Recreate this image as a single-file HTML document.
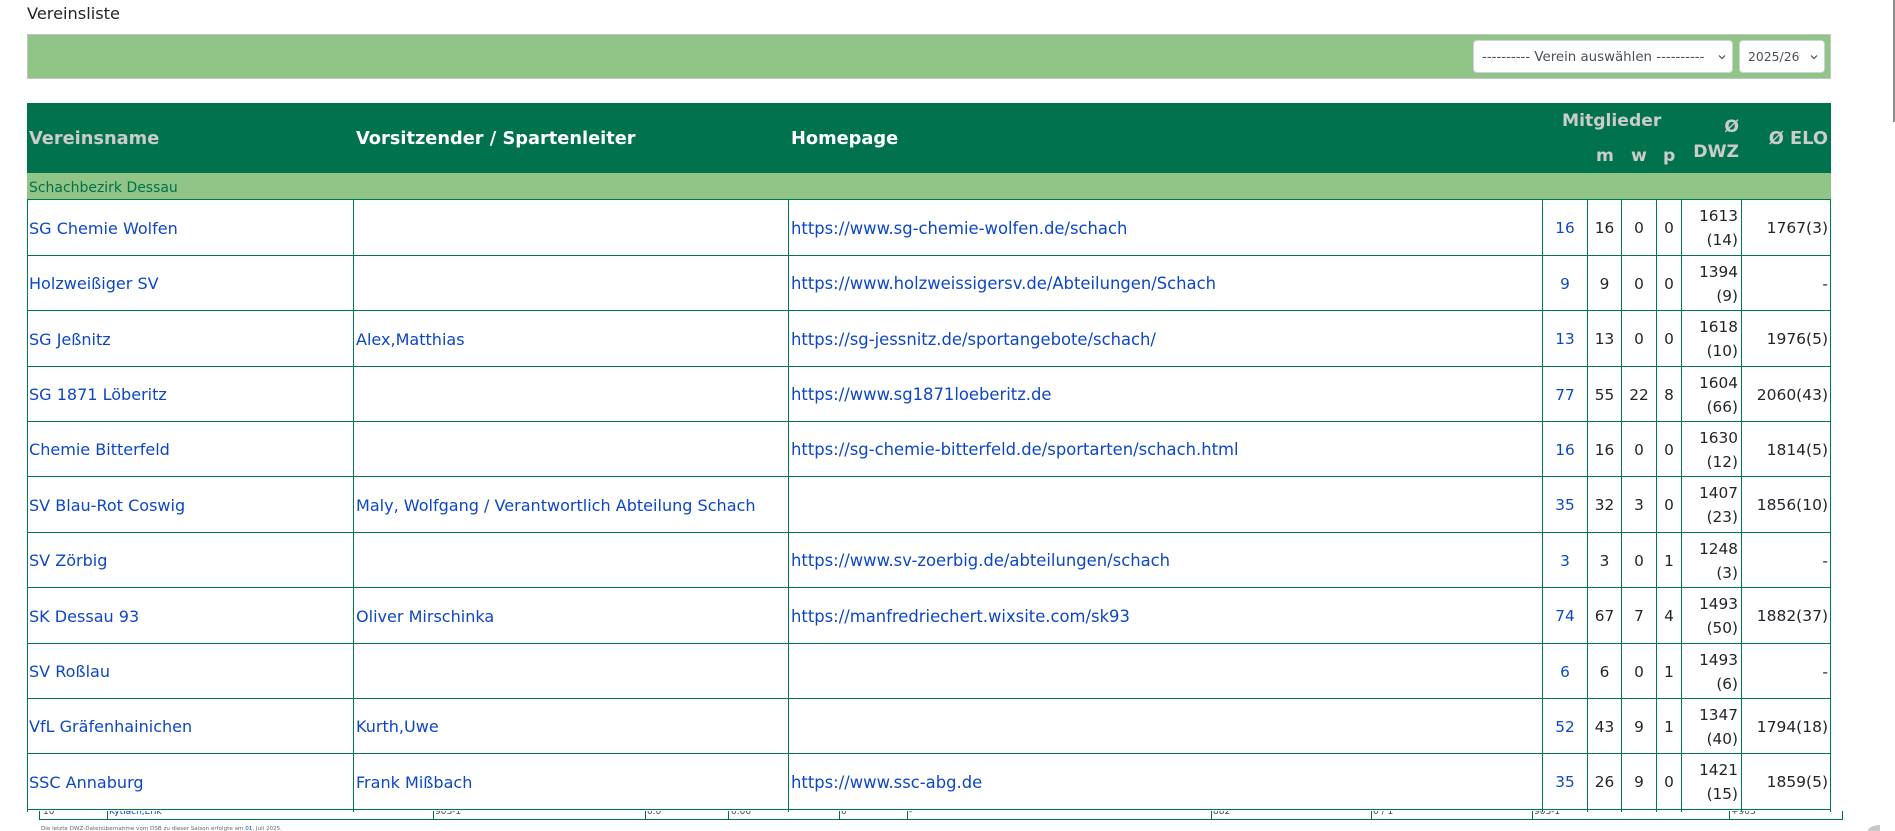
<!DOCTYPE html>
<html lang="de"><head><meta charset="utf-8"><title>Vereinsliste</title>
<style>
html,body{margin:0;padding:0;background:#fff;width:1895px;height:831px;overflow:hidden}
body{position:relative;font-family:"DejaVu Sans","Liberation Sans",sans-serif;font-size:15.3px;color:#212529}
.a{position:absolute;white-space:nowrap}
a{color:#0d47c4;text-decoration:none}
.r{position:absolute;left:0;width:1895px}
.r>*{position:absolute;white-space:nowrap;top:1px;line-height:inherit}
.n{left:29px;font-size:16.05px}.c{left:356px;font-size:16.05px}.h{left:791px;font-size:16.4px}
.k,.m,.w,.p{text-align:center}
.k{left:1543px;width:44px}.m{left:1588px;width:33px}.w{left:1622px;width:34px}.p{left:1657px;width:24px}
.d{left:1682px;width:56px;text-align:right;line-height:23.5px!important;white-space:normal!important;top:5px!important}
.e{left:1742px;width:86px;text-align:right;font-size:15.5px}
.hl{position:absolute;left:27px;width:1804px;height:1px;background:#007550}
.vl{position:absolute;top:199px;width:1px;height:613px;background:#007a55}
.th{position:absolute;white-space:nowrap;font-weight:bold;font-size:17.2px;color:#ccc}
.tl{font-size:17.8px}
.tick{position:absolute;top:811px;width:1px;height:9px;background:#00704a}
.low{position:absolute;top:803.5px;line-height:16px;font-size:9px;color:#444;white-space:nowrap}
.sel{position:absolute;top:40px;height:33px;line-height:33px;background:#fff;border:1px solid #ced4da;border-radius:4px;box-sizing:border-box;font-size:13.35px;color:#495057;white-space:nowrap}
.sel svg{position:absolute;top:12px;right:5px}
</style></head><body>
<div class="a" style="left:27px;top:4px;font-size:16.2px;line-height:20px">Vereinsliste</div>
<div class="a" style="left:27px;top:34px;width:1804px;height:45px;background:#91c587;box-sizing:border-box;border:1px solid #c2c8c0"></div>
<div class="sel" style="left:1473px;width:260px;padding-left:8px">---------- Verein auswählen ----------<svg width="10" height="8" viewBox="0 0 10 8"><path d="M2 2.5 5 5.5 8 2.5" fill="none" stroke="#4a5056" stroke-width="1.2"/></svg></div>
<div class="sel" style="left:1739px;width:86px;padding-left:8px;font-size:12.4px;line-height:32px">2025/26<svg width="10" height="8" viewBox="0 0 10 8"><path d="M2 2.5 5 5.5 8 2.5" fill="none" stroke="#4a5056" stroke-width="1.2"/></svg></div>

<div class="a" style="left:39px;top:809px;width:1804px;height:11px;box-sizing:border-box;border:solid #00704a;border-width:0 1px 1px 1px;overflow:hidden"></div>
<div class="tick" style="left:107px"></div><div class="tick" style="left:433px"></div><div class="tick" style="left:645px"></div><div class="tick" style="left:728px"></div><div class="tick" style="left:839px"></div><div class="tick" style="left:907px"></div><div class="tick" style="left:1211px"></div><div class="tick" style="left:1371px"></div><div class="tick" style="left:1532px"></div><div class="tick" style="left:1729px"></div>
<div class="low" style="left:43px">10</div><div class="low" style="left:109px;color:#0d47c4">Kytlach,Erik</div><div class="low" style="left:435px">903-1</div><div class="low" style="left:647px">0.0</div><div class="low" style="left:731px">0.00</div><div class="low" style="left:841px">0</div><div class="low" style="left:909px">-</div><div class="low" style="left:1213px">882</div><div class="low" style="left:1373px">0 / 1</div><div class="low" style="left:1534px">903-1</div><div class="low" style="left:1731px">+903</div>
<div class="a" style="left:41px;top:825px;font-size:5.6px;line-height:9px;color:#666">Die letzte DWZ-Datenübernahme vom DSB zu dieser Saison erfolgte am <span style="color:#0d47c4">01.</span> Juli 2025.</div>

<div class="a" style="left:27px;top:103px;width:1804px;height:70px;background:#00724d"></div>
<div class="a" style="left:27px;top:173px;width:1804px;height:26px;background:#91c587"></div>
<div class="th tl" style="left:29px;top:129px;line-height:20px">Vereinsname</div>
<div class="th tl" style="left:356px;top:129px;line-height:20px;color:#fff">Vorsitzender / Spartenleiter</div>
<div class="th tl" style="left:791px;top:129px;line-height:20px;color:#fff">Homepage</div>
<div class="th" style="left:1562px;top:111px;line-height:20px">Mitglieder</div>
<div class="th" style="left:1596px;top:146px;line-height:20px">m</div>
<div class="th" style="left:1631px;top:146px;line-height:20px">w</div>
<div class="th" style="left:1663px;top:146px;line-height:20px">p</div>
<div class="th" style="left:1680px;width:59px;text-align:right;top:117px;line-height:20px">Ø</div>
<div class="th" style="left:1680px;width:59px;text-align:right;top:142px;line-height:20px">DWZ</div>
<div class="th" style="left:1750px;width:78px;text-align:right;top:129px;line-height:20px;font-size:17.8px">Ø ELO</div>
<div class="a" style="left:29px;top:175px;line-height:26px;font-size:13.97px;color:#00704a">Schachbezirk Dessau</div>

<div class="a" style="left:0;top:199px;width:1895px;height:612px;background:#fff"></div>

<div class="hl" style="top:199px"></div><div class="hl" style="top:255px"></div><div class="hl" style="top:310px"></div><div class="hl" style="top:366px"></div><div class="hl" style="top:421px"></div><div class="hl" style="top:476px"></div><div class="hl" style="top:532px"></div><div class="hl" style="top:587px"></div><div class="hl" style="top:643px"></div><div class="hl" style="top:698px"></div><div class="hl" style="top:753px"></div><div class="hl" style="top:809px"></div>
<div class="vl" style="left:27px"></div><div class="vl" style="left:353px"></div><div class="vl" style="left:788px"></div><div class="vl" style="left:1542px"></div><div class="vl" style="left:1587px"></div><div class="vl" style="left:1621px"></div><div class="vl" style="left:1656px"></div><div class="vl" style="left:1681px"></div><div class="vl" style="left:1741px"></div><div class="vl" style="left:1830px"></div>

<div class="r" style="top:200px;height:55px;line-height:55px"><a class="n">SG Chemie Wolfen</a><a class="h">https://www.sg-chemie-wolfen.de/schach</a><a class="k">16</a><span class="m">16</span><span class="w">0</span><span class="p">0</span><span class="d">1613 (14)</span><span class="e">1767(3)</span></div>
<div class="r" style="top:256px;height:54px;line-height:54px"><a class="n">Holzweißiger SV</a><a class="h">https://www.holzweissigersv.de/Abteilungen/Schach</a><a class="k">9</a><span class="m">9</span><span class="w">0</span><span class="p">0</span><span class="d">1394 (9)</span><span class="e">-</span></div>
<div class="r" style="top:311px;height:55px;line-height:55px"><a class="n">SG Jeßnitz</a><a class="c">Alex,Matthias</a><a class="h">https://sg-jessnitz.de/sportangebote/schach/</a><a class="k">13</a><span class="m">13</span><span class="w">0</span><span class="p">0</span><span class="d">1618 (10)</span><span class="e">1976(5)</span></div>
<div class="r" style="top:367px;height:54px;line-height:54px"><a class="n">SG 1871 Löberitz</a><a class="h">https://www.sg1871loeberitz.de</a><a class="k">77</a><span class="m">55</span><span class="w">22</span><span class="p">8</span><span class="d">1604 (66)</span><span class="e">2060(43)</span></div>
<div class="r" style="top:422px;height:54px;line-height:54px"><a class="n">Chemie Bitterfeld</a><a class="h">https://sg-chemie-bitterfeld.de/sportarten/schach.html</a><a class="k">16</a><span class="m">16</span><span class="w">0</span><span class="p">0</span><span class="d">1630 (12)</span><span class="e">1814(5)</span></div>
<div class="r" style="top:477px;height:55px;line-height:55px"><a class="n">SV Blau-Rot Coswig</a><a class="c">Maly, Wolfgang / Verantwortlich Abteilung Schach</a><a class="k">35</a><span class="m">32</span><span class="w">3</span><span class="p">0</span><span class="d">1407 (23)</span><span class="e">1856(10)</span></div>
<div class="r" style="top:533px;height:54px;line-height:54px"><a class="n">SV Zörbig</a><a class="h">https://www.sv-zoerbig.de/abteilungen/schach</a><a class="k">3</a><span class="m">3</span><span class="w">0</span><span class="p">1</span><span class="d">1248 (3)</span><span class="e">-</span></div>
<div class="r" style="top:588px;height:55px;line-height:55px"><a class="n">SK Dessau 93</a><a class="c">Oliver Mirschinka</a><a class="h">https://manfredriechert.wixsite.com/sk93</a><a class="k">74</a><span class="m">67</span><span class="w">7</span><span class="p">4</span><span class="d">1493 (50)</span><span class="e">1882(37)</span></div>
<div class="r" style="top:644px;height:54px;line-height:54px"><a class="n">SV Roßlau</a><a class="k">6</a><span class="m">6</span><span class="w">0</span><span class="p">1</span><span class="d">1493 (6)</span><span class="e">-</span></div>
<div class="r" style="top:699px;height:54px;line-height:54px"><a class="n">VfL Gräfenhainichen</a><a class="c">Kurth,Uwe</a><a class="k">52</a><span class="m">43</span><span class="w">9</span><span class="p">1</span><span class="d">1347 (40)</span><span class="e">1794(18)</span></div>
<div class="r" style="top:754px;height:55px;line-height:55px"><a class="n">SSC Annaburg</a><a class="c">Frank Mißbach</a><a class="h">https://www.ssc-abg.de</a><a class="k">35</a><span class="m">26</span><span class="w">9</span><span class="p">0</span><span class="d">1421 (15)</span><span class="e">1859(5)</span></div>

<div class="a" style="left:1893px;top:0;width:2px;height:122px;background:#8a8a8a"></div>
<div class="a" style="left:1868px;top:825px;width:12px;height:6px;background:#c8c8c8;border-top-left-radius:12px 6px"></div>
</body></html>
